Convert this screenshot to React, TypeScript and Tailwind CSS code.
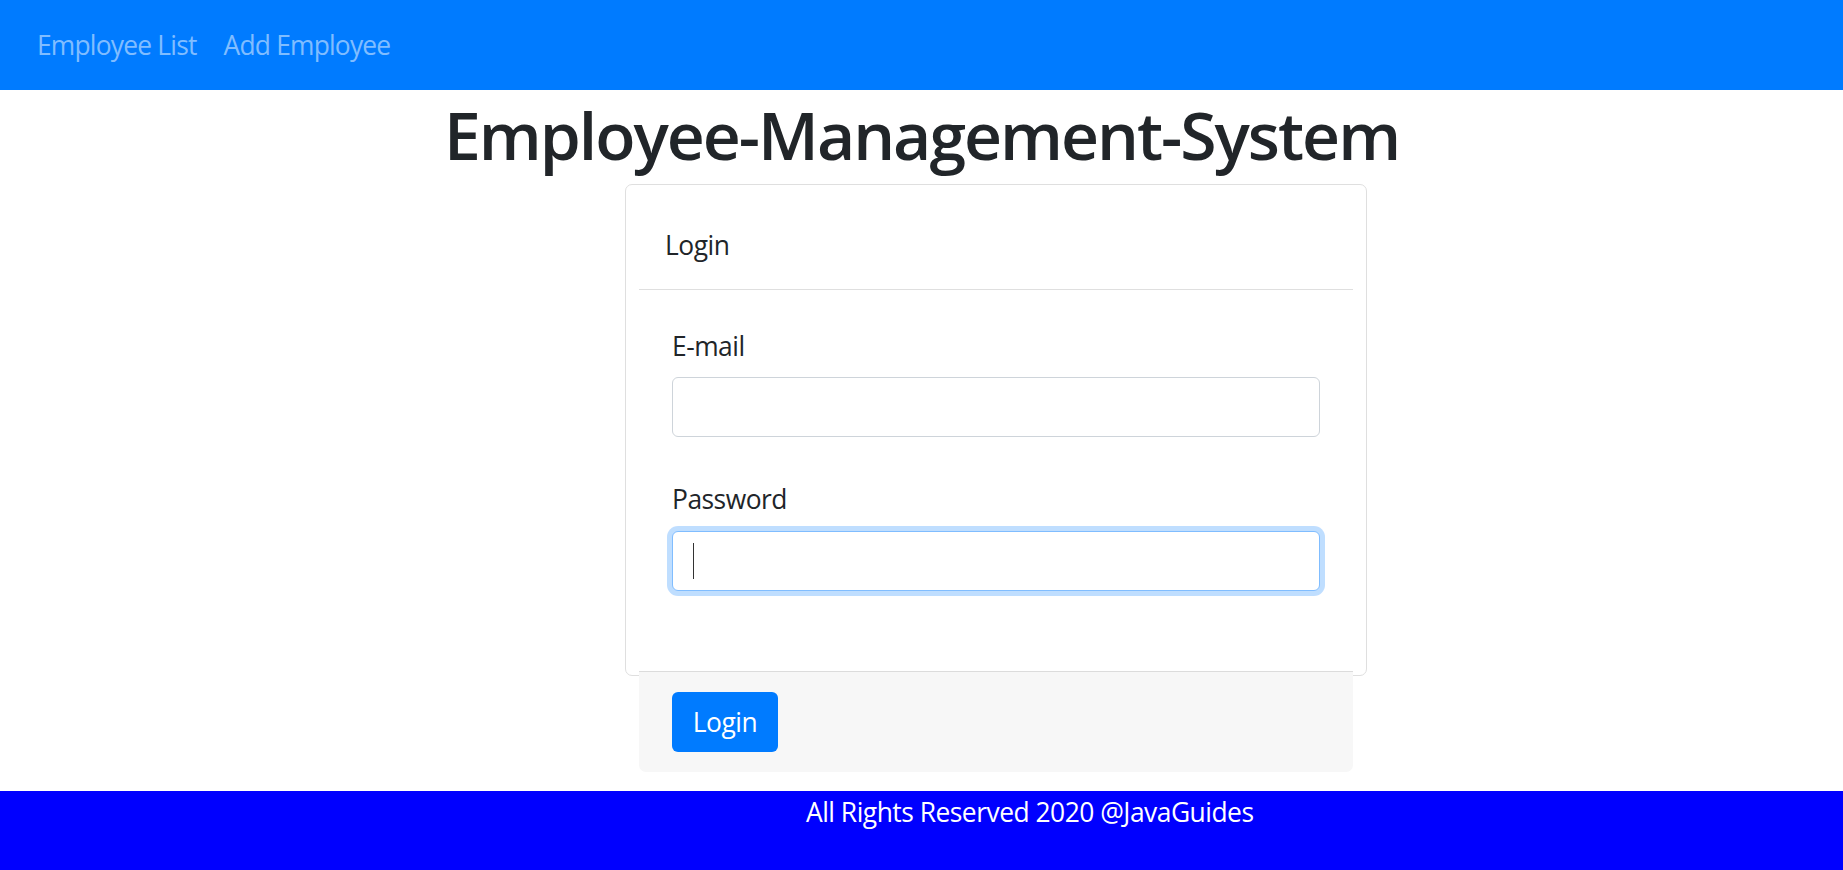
import React from "react";

export default function App() {
  return (
    <div className="min-h-screen bg-white font-['Open_Sans',sans-serif] text-[#212529]">
      <nav className="h-[90px] bg-[#007bff] flex items-center pl-[37px] pt-[2px] gap-[27px] text-[26.4px] tracking-[-0.8px] text-[#80bdff]">
        <span>Employee List</span>
        <span>Add Employee</span>
      </nav>
      <h1 className="h-[94px] flex items-center justify-center text-[66px] font-semibold tracking-[-2px] leading-none pb-[6px]">
        Employee-Management-System
      </h1>
      <div className="pl-[625px]">
        <div className="w-[742px] h-[492px] border border-[#dfdfdf] rounded-[7px] p-[13px] tracking-[-0.5px]">
          <div className="h-[92px] border-b border-[#dfdfdf] flex items-center pl-[26px] pt-[5px] text-[26.4px]">
            Login
          </div>
          <div className="h-[381px] px-[33px] pt-[36px] text-[26.4px]">
            <div className="leading-[40px]">E-mail</div>
            <div className="mt-[11px] h-[60px] border border-[#ced4da] rounded-[6px] bg-white"></div>
            <div className="mt-[41px] leading-[40px] pt-[1px]">Password</div>
            <div className="mt-[12px] h-[60px] border border-[#80bdff] rounded-[6px] bg-white shadow-[0_0_0_5px_rgba(0,123,255,0.25)] flex items-center pl-[20px]">
              <div className="w-[1px] h-[36px] bg-[#333]"></div>
            </div>
          </div>
          <div className="border-t border-[#dcdcdc] bg-[#f7f7f7] rounded-b-[7px] px-[33px] py-[20px]">
            <button className="w-[106px] h-[60px] bg-[#007bff] text-white text-[26.4px] rounded-[6px] flex items-center justify-center pt-[2px]">
              Login
            </button>
          </div>
        </div>
      </div>
      <footer className="mt-[115px] h-[79px] bg-[#0000ff] text-white pl-[806px] leading-[40px] pt-[1px] text-[26.4px] tracking-[-0.5px]">
        All Rights Reserved 2020 @JavaGuides
      </footer>
    </div>
  );
}
